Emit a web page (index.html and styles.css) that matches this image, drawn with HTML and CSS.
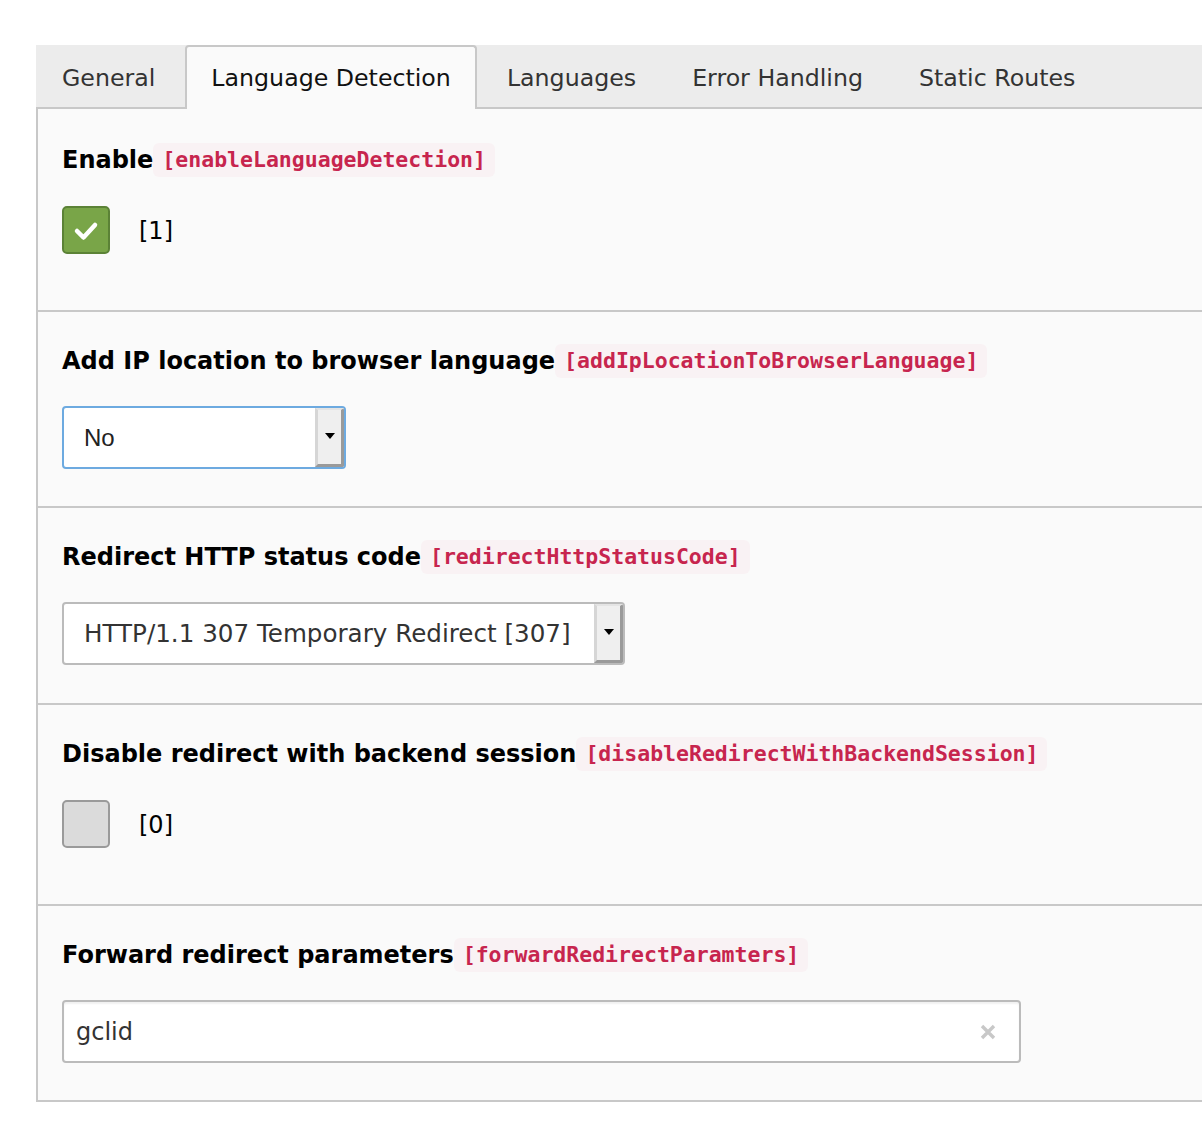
FILE: index.html
```html
<!DOCTYPE html>
<html>
<head>
<meta charset="utf-8">
<link rel="stylesheet" href="styles.css">
</head>
<body>
<div class="page">
  <div class="panel">
    <div class="tabs">
      <div class="tab">General</div>
      <div class="tab active">Language Detection</div>
      <div class="tab">Languages</div>
      <div class="tab">Error Handling</div>
      <div class="tab">Static Routes</div>
    </div>
    <div class="content">
      <div class="field first checkfield">
        <div class="label">Enable<code>[enableLanguageDetection]</code></div>
        <div class="check-row">
          <span class="cb on"><svg width="44" height="44" viewBox="0 0 44 44"><path d="M13 23 L19.5 29.5 L31 17" fill="none" stroke="#fff" stroke-width="4.5" stroke-linecap="round" stroke-linejoin="round"/></svg></span>
          <span class="val">[1]</span>
        </div>
      </div>
      <div class="field">
        <div class="label">Add IP location to browser language<code>[addIpLocationToBrowserLanguage]</code></div>
        <div class="select focus small">
          <span class="txt arial">No</span>
          <span class="btn"><span class="arrow"></span></span>
        </div>
      </div>
      <div class="field tall">
        <div class="label">Redirect HTTP status code<code>[redirectHttpStatusCode]</code></div>
        <div class="select wide">
          <span class="txt verd">HTTP/1.1 307 Temporary Redirect [307]</span>
          <span class="btn"><span class="arrow"></span></span>
        </div>
      </div>
      <div class="field checkfield">
        <div class="label">Disable redirect with backend session<code>[disableRedirectWithBackendSession]</code></div>
        <div class="check-row">
          <span class="cb off"></span>
          <span class="val">[0]</span>
        </div>
      </div>
      <div class="field">
        <div class="label">Forward redirect parameters<code>[forwardRedirectParamters]</code></div>
        <div class="text-input">
          <span class="txt">gclid</span>
          <svg class="clear" width="16" height="16" viewBox="0 0 16 16"><path d="M2 2 L14 14 M14 2 L2 14" stroke="#c8c8c8" stroke-width="3.4" stroke-linecap="butt"/></svg>
        </div>
      </div>
    </div>
  </div>
</div>
</body>
</html>
```
FILE: styles.css
```css
html, body {
  margin: 0;
  padding: 0;
  background: #fff;
  overflow: hidden;
}
body {
  font-family: "DejaVu Sans", Verdana, sans-serif;
  color: #000;
}
.page {
  padding: 45px 0 0 36px;
}
.panel {
  width: calc(100vw - 36px);
}
.tabs {
  display: flex;
  gap: 4px;
  height: 62px;
  background: #ececec;
  border-bottom: 2px solid #c8c8c8;
}
.tab {
  box-sizing: border-box;
  height: 64px;
  margin-bottom: -2px;
  padding: 0 24px;
  border: 2px solid transparent;
  border-bottom: 0;
  border-radius: 4px 4px 0 0;
  display: flex;
  align-items: center;
  font-size: 23.7px;
  color: #333;
}
.tab.active {
  background: #fafafa;
  border-color: #c8c8c8;
  color: #111;
}
.content {
  background: #fafafa;
  border-left: 2px solid #c8c8c8;
  border-bottom: 2px solid #c8c8c8;
}
.field {
  padding: 32px 24px 37px;
  border-top: 2px solid #c8c8c8;
}
.field.first {
  border-top: 0;
  padding-top: 34px;
}
.field.tall {
  padding-bottom: 38px;
}
.label {
  display: flex;
  align-items: center;
  height: 34px;
  margin-bottom: 28px;
  font-size: 24px;
  font-weight: bold;
  color: #000;
  white-space: nowrap;
}
.checkfield .label {
  margin-bottom: 29px;
}
.label code {
  font-family: "DejaVu Sans Mono", "Liberation Mono", monospace;
  font-size: 21.5px;
  font-weight: bold;
  line-height: 26px;
  color: #c7254e;
  background: #f9f2f4;
  padding: 4px 9px;
  border-radius: 6px;
}
.check-row {
  display: flex;
  align-items: center;
  gap: 29px;
  height: 48px;
  margin-bottom: 19px;
}
.cb {
  box-sizing: border-box;
  width: 48px;
  height: 48px;
  border-radius: 5px;
  border: 2px solid #999;
  display: flex;
  align-items: center;
  justify-content: center;
}
.cb.on {
  background: #79a548;
  border-color: #5b8236;
}
.cb.off {
  background: #dbdbdb;
  border-color: #9a9a9a;
}
.val {
  font-size: 24px;
  color: #000;
  margin-top: 2px;
}
.select {
  box-sizing: border-box;
  display: flex;
  height: 63px;
  border: 2px solid #bbb;
  border-radius: 4px;
  background: #fff;
  overflow: hidden;
}
.select.small {
  width: 284px;
}
.select.wide {
  width: 563px;
}
.select.focus {
  border-color: #6daae0;
}
.select .txt {
  flex: 1;
  display: flex;
  align-items: center;
  padding-left: 20px;
  font-size: 24px;
  color: #333;
  white-space: nowrap;
}
.select .txt.arial {
  font-family: "Liberation Sans", Arial, sans-serif;
  color: #222;
}
.select .txt.verd {
  font-size: 24.6px;
}
.select .btn {
  box-sizing: border-box;
  width: 29px;
  background: #efefef;
  border-top: 2px solid #e4e4e4;
  border-left: 3px solid #d6d6d6;
  border-right: 3px solid #9a9a9a;
  border-bottom: 3px solid #9a9a9a;
  display: flex;
  align-items: center;
  justify-content: center;
}
.arrow {
  width: 0;
  height: 0;
  border-left: 5px solid transparent;
  border-right: 5px solid transparent;
  border-top: 6px solid #000;
  margin-top: -3px;
}
.text-input {
  box-sizing: border-box;
  width: 959px;
  height: 63px;
  border: 2px solid #bbb;
  border-radius: 4px;
  background: #fff;
  box-shadow: inset 0 2px 2px rgba(0, 0, 0, 0.06);
  display: flex;
  align-items: center;
  justify-content: space-between;
  padding: 0 23px 0 12px;
  font-size: 24px;
  color: #333;
}
.clear {
  display: block;
}
```
